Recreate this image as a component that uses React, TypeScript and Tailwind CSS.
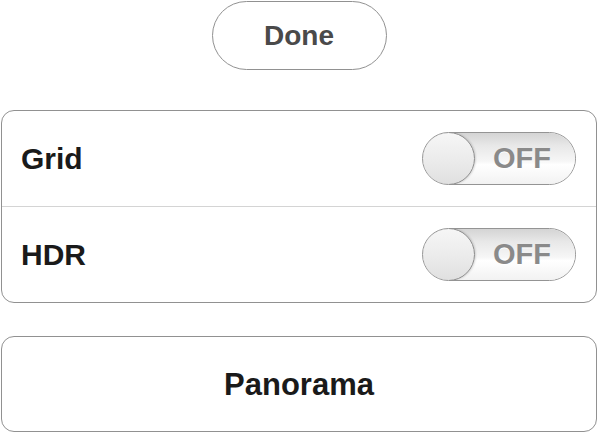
import React from "react";

function Toggle() {
  return (
    <div className="relative w-[154px] h-[53px] rounded-full border border-[#949494] overflow-hidden">
      <div className="absolute inset-0 bg-[linear-gradient(to_bottom,#d4d4d4_0%,#e8e8e8_25%,#f6f6f6_55%,#ffffff_62%,#f2f2f2_100%)]" />
      <div className="absolute inset-0 flex items-center justify-end pr-[24px]">
        <span className="text-[29px] font-bold text-[#8a8a8a] leading-none" style={{ textShadow: "0 1px 0 #ffffff" }}>
          OFF
        </span>
      </div>
      <div className="absolute left-[-1px] top-[-1px] w-[53px] h-[53px] rounded-full border-[1.5px] border-[#8a8a8a] bg-[linear-gradient(to_bottom,#f6f6f6_0%,#ececec_50%,#e0e0e0_100%)] shadow-[1px_0_2px_rgba(0,0,0,0.15)]" />
    </div>
  );
}

export default function App() {
  return (
    <div
      className="w-[598px] h-[433px] bg-white flex flex-col items-center overflow-hidden"
      style={{ fontFamily: '"Liberation Sans", Arial, sans-serif' }}
    >
      <button className="mt-[1px] w-[175px] h-[69px] rounded-full border border-[#919191] bg-white flex items-center justify-center">
        <span className="text-[28px] font-bold text-[#4a4a4a] leading-none">Done</span>
      </button>

      <div className="mt-[40px] w-[596px] h-[193px] rounded-[13px] border border-[#919191] bg-white flex flex-col">
        <div className="h-[95px] flex items-center justify-between pl-[19px] pr-[20px]">
          <span className="text-[30px] font-bold text-[#1a1a1a] leading-none">Grid</span>
          <Toggle />
        </div>
        <div className="h-px bg-[#d4d4d4]" />
        <div className="h-[95px] flex items-center justify-between pl-[19px] pr-[20px]">
          <span className="text-[30px] font-bold text-[#1a1a1a] leading-none">HDR</span>
          <Toggle />
        </div>
      </div>

      <div className="mt-[33px] w-[596px] h-[96px] rounded-[13px] border border-[#919191] bg-white flex items-center justify-center">
        <span className="text-[31px] font-bold text-[#1a1a1a] leading-none">Panorama</span>
      </div>
    </div>
  );
}
